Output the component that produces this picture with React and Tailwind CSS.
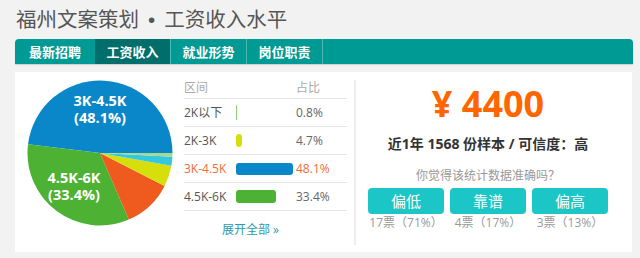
import React from "react";

const slices = [
  { p: 48.1, c: "#0a87c9" },
  { p: 33.4, c: "#4db134" },
  { p: 11.0, c: "#ef5a1e" },
  { p: 4.7, c: "#d6de0c" },
  { p: 2.0, c: "#35c6e0" },
  { p: 0.8, c: "#a6d88f" },
];

function Pie() {
  const cx = 73, cy = 73, r = 72.5;
  let start = 0;
  const pt = (a) => [cx + r * Math.cos((a * Math.PI) / 180), cy - r * Math.sin((a * Math.PI) / 180)];
  const paths = slices.map((s, i) => {
    const end = start + s.p * 3.6;
    const [x1, y1] = pt(start);
    const [x2, y2] = pt(end);
    const large = s.p > 50 ? 1 : 0;
    const d = `M${cx},${cy} L${x1},${y1} A${r},${r} 0 ${large} 0 ${x2},${y2} Z`;
    start = end;
    return <path key={i} d={d} fill={s.c} />;
  });
  return (
    <svg width="146" height="146" viewBox="0 0 146 146">
      {paths}
      <g fill="#fff" fontFamily="'Open Sans', sans-serif" fontWeight="700" fontSize="14.5" textAnchor="middle">
        <text x="73" y="26">
          <tspan x="73" y="26">3K-4.5K</tspan>
          <tspan x="73" y="43">(48.1%)</tspan>
        </text>
        <text x="47" y="103">
          <tspan x="47" y="103">4.5K-6K</tspan>
          <tspan x="47" y="120">(33.4%)</tspan>
        </text>
      </g>
    </svg>
  );
}

const rows = [
  { label: "2K以下", pct: "0.8%", w: 1, color: "#8fcf7c", h: "h-[15px]", hl: false },
  { label: "2K-3K", pct: "4.7%", w: 6, color: "#d6de0c", h: "h-[13px]", hl: false },
  { label: "3K-4.5K", pct: "48.1%", w: 57, color: "#0a87c9", h: "h-[12px]", hl: true },
  { label: "4.5K-6K", pct: "33.4%", w: 40, color: "#4db134", h: "h-[13px]", hl: false },
];

const tabs = ["最新招聘", "工资收入", "就业形势", "岗位职责"];

export default function App() {
  const sans = { fontFamily: "'Open Sans', 'Noto Sans CJK SC', sans-serif" };
  const cjk = { fontFamily: "'Noto Sans CJK SC', sans-serif" };
  return (
    <div className="w-[640px] h-[258px] bg-[#f2f2f2] overflow-hidden" style={sans}>
      <div className="h-[39px] pl-[16px] pt-[6px]">
        <h1 className="text-[20.5px] leading-[25px] text-[#555] font-normal" style={cjk}>
          福州文案策划<span className="px-[9px]" style={{ fontFamily: "'Liberation Sans', sans-serif" }}>•</span>工资收入水平
        </h1>
      </div>
      <div className="ml-[15px] w-[618px] h-[25px] bg-[#009a94] rounded-t-[4px] flex shadow-[0_1px_1px_rgba(0,0,0,0.15)]">
        {tabs.map((t, i) => (
          <div
            key={t}
            className={
              i === 0
                ? "w-[80px] h-full flex items-center justify-center text-white font-bold text-[13px] rounded-tl-[4px]"
                : i === 1
                ? "w-[75px] h-full flex items-center justify-center text-white font-bold text-[13px] bg-[#006e6b]"
                : "w-[76px] h-full flex items-center justify-center text-white font-bold text-[13px] border-l border-[#4db8b3]"
            }
            style={cjk}
          >
            {t}
          </div>
        ))}
        <div className="h-full border-l border-[#4db8b3]"></div>
      </div>
      <div className="mt-[8px] ml-[15px] w-[617px] h-[180px] bg-white flex">
        <div className="w-[169px] pl-[12px] pt-[8px]">
          <Pie />
        </div>
        <div className="w-[163px]">
          <div className="h-[27px] border-b border-[#e6e6e6] flex pt-[8px] text-[12px] leading-[16px] text-[#aaa]">
            <span className="w-[112px]">区间</span>
            <span>占比</span>
          </div>
          {rows.map((r) => (
            <div key={r.label} className="h-[28px] border-b border-[#e6e6e6] flex items-center text-[12px]">
              <span className={r.hl ? "w-[52px] text-[#f26c3b]" : "w-[52px] text-[#555]"}>{r.label}</span>
              <span className="w-[60px] flex items-center">
                <span className={`${r.h} rounded-[3px] block`} style={{ width: r.w, background: r.color }}></span>
              </span>
              <span className={r.hl ? "text-[#f26c3b]" : "text-[#666]"}>{r.pct}</span>
            </div>
          ))}
          <div className="mt-[11px] pl-[38px] text-[12px] leading-[16px] text-[#2e9bb0]">展开全部 »</div>
        </div>
        <div className="ml-[7px] mt-[8px] mb-[7px] w-[2px] bg-[#eeeeee]"></div>
        <div className="w-[264px] flex flex-col items-center">
          <div className="mt-[14px] text-[36px] leading-[36px] font-bold text-[#ff6600]">¥ 4400</div>
          <div className="mt-[12px] text-[14px] leading-[20px] font-bold text-[#333]">近1年 1568 份样本 / 可信度：高</div>
          <div className="mt-[13px] text-[12px] leading-[18px] text-[#999]">你觉得该统计数据准确吗？</div>
          <div className="mt-[3px] flex gap-[6px]">
            {[
              ["偏低", "17票（71%）"],
              ["靠谱", "4票（17%）"],
              ["偏高", "3票（13%）"],
            ].map(([b, v]) => (
              <div key={b} className="w-[76px] flex flex-col items-center">
                <div className="w-full h-[26px] rounded-[4px] bg-[#1cc5c6] text-white text-[15px] flex items-center justify-center">{b}</div>
                <div className="mt-[1px] text-[12px] leading-[16px] text-[#999]">{v}</div>
              </div>
            ))}
          </div>
        </div>
      </div>
    </div>
  );
}
